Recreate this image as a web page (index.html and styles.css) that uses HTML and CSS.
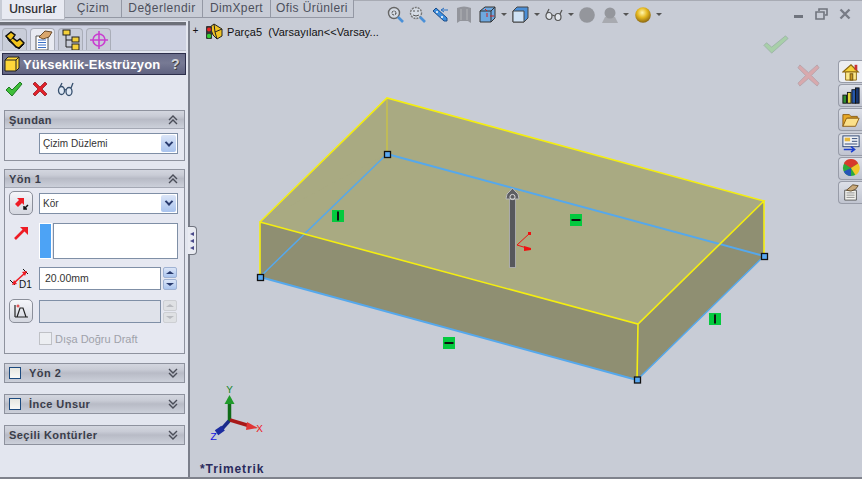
FILE: index.html
```html
<!DOCTYPE html>
<html lang="tr">
<head>
<meta charset="utf-8">
<title>Yükseklik-Ekstrüzyon</title>
<link rel="stylesheet" href="styles.css">
</head>
<body>
<div class="app">
  <aside class="side">
    <nav class="tabs">
      <span class="tab active">Unsurlar</span>
      <span class="tab t2">Çizim</span>
      <span class="tab t3">Değerlendir</span>
      <span class="tab t4">DimXpert</span>
      <span class="tab t5">Ofis Ürünleri</span>
    </nav>
    <div class="rule"></div>
    <div class="mgr-tabs">
      <span class="mgr-tab"><svg width="20" height="20" viewBox="0 0 20 20"><path d="M1 6l5-4 4 3-2 3 4 3 3-2 4 4-5 5-3-1z" fill="#f2c41c" stroke="#111" stroke-width="1.500"/><path d="M1 6l3 5 10 8M4 11l4-3M14 19l5-5" fill="none" stroke="#111"/></svg></span>
      <span class="mgr-tab on"><svg width="20" height="22" viewBox="0 0 20 22"><path d="M3 7h12v14H3z" fill="#fff" stroke="#555"/><path d="M5 11h8M5 13.500h8M5 16h8M5 18.500h8" stroke="#3a6fc4"/><path d="M6 8l6-6 7 1-3 5-6 2z" fill="#d9a66c" stroke="#6a4a2a"/></svg></span>
      <span class="mgr-tab"><svg width="20" height="22" viewBox="0 0 20 22"><path d="M5 4v14h6M5 11h6" fill="none" stroke="#222"/><rect x="2" y="1" width="7" height="5" fill="#f4d03a" stroke="#222"/><rect x="11" y="8" width="7" height="5" fill="#f4d03a" stroke="#222"/><rect x="11" y="15" width="7" height="6" fill="#f4d03a" stroke="#222"/></svg></span>
      <span class="mgr-tab"><svg width="20" height="20" viewBox="0 0 20 20" fill="none" stroke="#c93fd0" stroke-width="1.600"><circle cx="10" cy="10" r="6"/><path d="M10 1v18M1 10h18"/></svg></span>
    </div>
    <header class="title">
      <svg width="16" height="16" viewBox="0 0 16 16"><path d="M1 4l3-3h11v11l-3 3H1z" fill="#ffd83a" stroke="#222"/><path d="M1 4h11v11M12 4l3-3" fill="none" stroke="#222"/></svg>
      <span class="title-text">Yükseklik-Ekstrüzyon</span>
      <span class="help">?</span>
    </header>
    <div class="actions">
      <svg width="18" height="16" viewBox="0 0 18 16"><path d="M1 9l3-3 3 3 8-8 2 2-10 12z" fill="#3fbe3a" stroke="#1f7a22"/></svg>
      <svg width="16" height="16" viewBox="0 0 16 16"><path d="M1 3l2-2 5 5 5-5 2 2-5 5 5 5-2 2-5-5-5 5-2-2 5-5z" fill="#e2212a" stroke="#8c1015" stroke-width=".7"/></svg>
      <svg width="18" height="16" viewBox="0 0 18 16" fill="#dfe8f5" stroke="#37506e" stroke-width="1.300"><ellipse cx="4.500" cy="9.500" rx="3" ry="4"/><ellipse cx="12" cy="10.500" rx="3" ry="4"/><path d="M7 8l2 1M3 6l2-4M14 7l2-5" fill="none"/></svg>
    </div>

    <section class="group first">
      <div class="group-head"><span class="head-text">Şundan</span><svg class="chev" viewBox="0 0 10 10"><path d="M1 5l4-4 4 4M1 9l4-4 4 4"/></svg></div>
      <div class="group-body">
        <div class="row-indent"><div class="select">Çizim Düzlemi<span class="select-btn"><i></i></span></div></div>
      </div>
    </section>

    <section class="group second">
      <div class="group-head"><span class="head-text">Yön 1</span><svg class="chev" viewBox="0 0 10 10"><path d="M1 5l4-4 4 4M1 9l4-4 4 4"/></svg></div>
      <div class="group-body tall">
        <div class="line first-line">
          <span class="icon-btn"><svg width="16" height="16" viewBox="0 0 16 16"><path d="M2 9l4-4-2-2h7v7L9 8l-4 4z" fill="#ee1c25"/><path d="M15 10l-4 4M11 11v3h3" fill="none" stroke="#111" stroke-width="1.500"/></svg></span>
          <div class="select">Kör<span class="select-btn"><i></i></span></div>
        </div>
        <div class="line">
          <span class="icon-slot"><svg width="16" height="16" viewBox="0 0 16 16"><path d="M2 14L11 5" stroke="#ee1c25" stroke-width="2.600"/><path d="M7 2h8v8z" fill="#ee1c25"/></svg></span>
          <div class="list"><span class="list-blue"></span><span class="list-box"></span></div>
        </div>
        <div class="line spin-line">
          <span class="icon-slot dim"><svg width="22" height="22" viewBox="0 0 22 22"><path d="M5 15L16 5" stroke="#ee1c25" stroke-width="1.600"/><path d="M1 12l5 5M14 1l5 5" stroke="#111"/><path d="M3 17l5-1-3-4zM18 3l-5 1 3 4z" fill="#ee1c25"/></svg><b>D1</b></span>
          <div class="input">20.00mm</div>
          <div class="spin"><span><i class="up"></i></span><span><i class="down"></i></span></div>
        </div>
        <div class="line spin-line">
          <span class="icon-btn"><svg width="16" height="16" viewBox="0 0 16 16" fill="none" stroke="#222"><path d="M2 14h13M4 14l3-9h3l3 9M2 14V2" stroke-width="1.200"/><circle cx="5" cy="3" r="1" stroke="#d22"/></svg></span>
          <div class="input off"></div>
          <div class="spin off"><span><i class="up"></i></span><span><i class="down"></i></span></div>
        </div>
        <label class="check-line"><span class="check off"></span>Dışa Doğru Draft</label>
      </div>
    </section>

    <section class="group closed c1">
      <div class="group-head"><span class="check"></span><span class="head-text">Yön 2</span><svg class="chev" viewBox="0 0 10 10"><path d="M1 1l4 4 4-4M1 5l4 4 4-4"/></svg></div>
    </section>
    <section class="group closed">
      <div class="group-head"><span class="check"></span><span class="head-text">İnce Unsur</span><svg class="chev" viewBox="0 0 10 10"><path d="M1 1l4 4 4-4M1 5l4 4 4-4"/></svg></div>
    </section>
    <section class="group closed">
      <div class="group-head"><span class="head-text">Seçili Kontürler</span><svg class="chev" viewBox="0 0 10 10"><path d="M1 1l4 4 4-4M1 5l4 4 4-4"/></svg></div>
    </section>
  </aside>

  <span class="grip"><i></i><i></i><i></i></span>

  <main class="view">
    <div class="tree"><span class="plus">+</span>
      <svg width="18" height="18" viewBox="0 0 18 18"><path d="M5 4l4-3 8 5v7l-5 3-4-4z" fill="#f0c322" stroke="#222"/><path d="M9 1l1 8 7-3M10 9l2 7" fill="none" stroke="#222"/><rect x="1" y="3" width="6" height="13" rx="1" fill="#333"/><circle cx="4" cy="6.500" r="2" fill="#e22"/><circle cx="4" cy="13" r="2.200" fill="#3c3"/></svg>
      <span class="tree-text">Parça5&nbsp; (Varsayılan&lt;&lt;Varsay...</span>
    </div>

    <div class="view-tools">
      <svg class="a" width="17" height="17" viewBox="0 0 17 17"><circle cx="7" cy="7" r="5.500" fill="#d5dbe4" stroke="#666" stroke-width="1.400"/><circle cx="7" cy="7" r="2" fill="none" stroke="#333" stroke-dasharray="2 1"/><path d="M11 11l5 5" stroke="#4a90d8" stroke-width="2.600"/></svg>
      <svg class="a" width="17" height="17" viewBox="0 0 17 17"><circle cx="7" cy="7" r="5.500" fill="#d5dbe4" stroke="#777" stroke-width="1.400" stroke-dasharray="2 1"/><path d="M4 9q3 2 6 0M4 5h2M8 5h2" stroke="#555" fill="none"/><path d="M11 11l5 5" stroke="#4a90d8" stroke-width="2.600"/></svg>
      <svg class="b" width="17" height="17" viewBox="0 0 17 17"><path d="M1 5l3-3 11 10v3h-3z" fill="#3d8fe0" stroke="#1c4c88"/><circle cx="5" cy="6" r="1" fill="#fff"/><circle cx="10" cy="11" r="1" fill="#fff"/><path d="M9 4h7M9 4l3-2M9 4l3 2" stroke="#2a70c0" fill="none"/></svg>
      <svg class="faded b" width="14" height="17" viewBox="0 0 14 17"><path d="M0 2q7-3 14 0v15q-3-2-3-2H3l-3 2z" fill="#8e9096"/><path d="M4 3v11M10 3v11" stroke="#a5a7ac" stroke-width="1.500"/></svg>
      <span class="tool b"><svg width="17" height="17" viewBox="0 0 17 17"><path d="M1 5l5-4h10v11l-4 4H1z" fill="#6ea8e0" stroke="#333"/><path d="M1 5h11v11M12 5l4-4" fill="none" stroke="#333"/><path d="M8 7v4M6 3l2 2M11 10h4" stroke="#c22"/></svg><i></i></span>
      <span class="tool"><svg width="17" height="17" viewBox="0 0 17 17"><path d="M1 5l4-4h11v11l-4 4H1z" fill="#4a8fd8" stroke="#444"/><path d="M1 5h11v11H1z" fill="#cfe2f5" stroke="#444"/></svg><i></i></span>
      <span class="tool"><svg width="18" height="15" viewBox="0 0 18 15" fill="#e2e6ec" stroke="#555" stroke-width="1.200"><ellipse cx="4" cy="9" rx="3" ry="3.500"/><ellipse cx="13" cy="10" rx="3" ry="3.500"/><path d="M7 8l3 1M2 6l2-4M15 7l2-4" fill="none"/></svg><i></i></span>
      <svg class="faded" width="16" height="16" viewBox="0 0 16 16"><circle cx="8" cy="8" r="7.800" fill="#8f9196"/></svg>
      <span class="tool c"><svg class="faded" width="16" height="16" viewBox="0 0 16 16"><path d="M0 16l3-6h10l3 6z" fill="#a5a7ac"/><circle cx="8" cy="6" r="5.500" fill="#8f9196"/></svg><i></i></span>
      <span class="tool d"><svg width="16" height="16" viewBox="0 0 16 16"><defs><radialGradient id="gold" cx=".45" cy=".35" r=".7"><stop offset="0" stop-color="#fff6b0"/><stop offset=".45" stop-color="#e5b81f"/><stop offset="1" stop-color="#7d5a10"/></radialGradient></defs><circle cx="8" cy="8" r="7.800" fill="url(#gold)"/></svg><i></i></span>
    </div>

    <div class="win-btns">
      <span class="win-min"></span>
      <svg width="13" height="12" viewBox="0 0 13 12" fill="none" stroke="#70747e" stroke-width="1.600"><path d="M4 3V1h8v6H10M1 4h8v7H1z"/></svg>
      <svg width="12" height="12" viewBox="0 0 12 12"><path d="M1.500 1.500l9 9M10.500 1.500l-9 9" stroke="#787c86" stroke-width="2.400"/></svg>
    </div>

    <svg class="ok" width="26" height="19" viewBox="0 0 30 22"><path d="M1 12l3-3 6 5L26 1l3 3L10 21z" fill="#a8cfa9" stroke="#9db2a8"/></svg>
    <svg class="cancel" width="23" height="23" viewBox="0 0 24 24"><path d="M3 1l9 8 9-8 2 3-8 8 8 8-2 3-9-8-9 8-2-3 8-8-8-8z" fill="#d8a9ad" stroke="#b9a5ac"/></svg>

    <div class="task">
      <span class="task-btn"><svg width="20" height="20" viewBox="0 0 20 20"><path d="M1 10l9-8 8 8z" fill="#f5d23a" stroke="#8a6510" stroke-width="1.300"/><path d="M4 10h12v9H4z" fill="#fbe88a" stroke="#8a6510"/><rect x="9" y="12" width="3" height="7" fill="#c99820" stroke="#6b4d0d"/><rect x="14" y="2" width="3" height="6" fill="#c33"/></svg></span>
      <span class="task-btn"><svg width="20" height="20" viewBox="0 0 20 20"><rect x="1" y="9" width="4" height="9" fill="#2c8c2f" stroke="#111"/><rect x="6" y="6" width="4" height="12" fill="#e4d53a" stroke="#111"/><rect x="11" y="3" width="4" height="15" fill="#2457a8" stroke="#111"/><rect x="15" y="1" width="4" height="17" fill="#17366f" stroke="#111"/></svg></span>
      <span class="task-btn"><svg width="20" height="18" viewBox="0 0 20 18"><path d="M1 3h7l2 2h7v2H6L1 16z" fill="#e8a927" stroke="#8a5a10"/><path d="M5 7h14l-4 9H1z" fill="#fbe08a" stroke="#8a5a10"/></svg></span>
      <span class="task-btn"><svg width="20" height="20" viewBox="0 0 20 20"><rect x="1" y="1" width="18" height="12" fill="#eef1f6" stroke="#27406e"/><path d="M3 3h6v4H3z" fill="#e6b73a"/><path d="M11 4h6M11 7h6M3 10h14" stroke="#27406e"/><path d="M2 16h11M10 13l4 3-4 3" stroke="#1c3fd0" stroke-width="1.700" fill="none"/></svg></span>
      <span class="task-btn"><svg width="20" height="20" viewBox="0 0 20 20"><circle cx="10" cy="10" r="9" fill="#2caa3c"/><path d="M10 10L2 5a9 9 0 0 1 16 0z" fill="#d63a2c"/><path d="M10 10l8-5a9 9 0 0 1-3 13z" fill="#f0c82a"/><path d="M10 10v9a9 9 0 0 1-8-5z" fill="#2454b8"/></svg></span>
      <span class="task-btn"><svg width="20" height="20" viewBox="0 0 20 20"><path d="M3 8h13v11H3z" fill="#f2f2ee" stroke="#555"/><path d="M5 11h9M5 13.500h9M5 16h9" stroke="#888"/><path d="M5 8l7-6 6 1-3 4-5 2z" fill="#c9a97a" stroke="#5f4a2a"/></svg></span>
    </div>

    <svg class="model" width="672" height="458" viewBox="190 21 672 458">
      <polygon class="f-top" points="387,98 764,201 764,256 638,324 260,222"/>
      <polygon class="f-side" points="260,222 638,324 637,380 260,277"/>
      <polygon class="f-side" points="638,324 764,201 764,256 637,380"/>
      <polygon class="f-top" points="387,98 260,222 387,154"/>
      <path class="faint" d="M387 98V154"/>
      <path class="blue thin" d="M260 277L387 154M764 256L637 380"/>
      <path class="blue" d="M387 154L764 256M260 277L637 380"/>
      <path class="yel" d="M260 222L387 98L764 201L638 324L260 222V277M638 324L637 380M764 201V256"/>
      <g class="handle-pts">
        <rect x="384.500" y="151.500" width="6" height="6"/><rect x="761.500" y="253.500" width="6" height="6"/><rect x="634.500" y="377" width="6" height="6"/><rect x="257.500" y="274.500" width="6" height="6"/>
      </g>
      <g class="rel"><rect x="332" y="210" width="12" height="12"/><path d="M338 211.500v9"/></g>
      <g class="rel"><rect x="570" y="214" width="12" height="12"/><path d="M571.500 220h9"/></g>
      <g class="rel"><rect x="709" y="313" width="12" height="12"/><path d="M715 314.500v9"/></g>
      <g class="rel"><rect x="443" y="337" width="12" height="12"/><path d="M444.500 343h9"/></g>
      <rect class="stem" x="509.500" y="198.500" width="6" height="69"/>
      <path class="knob" d="M506 199q0-6 4-8l2.500-3 2.500 3q4 2 4 8z"/>
      <circle class="knob-eye" cx="512.500" cy="197" r="2.600"/>
      <path class="origin" d="M517 245L530 233M517 245L530 249"/>
      <rect class="origin-fill" x="528" y="232" width="3" height="3"/>
      <path class="origin-fill" d="M524 246l7 2 0 2-7 1z"/>
      <g class="triad">
        <path class="t-g" d="M229.500 422V403"/><path class="t-gf" d="M229.500 395l-5 9h10z"/>
        <path class="t-r" d="M230 420L250 426"/><path class="t-rf" d="M258 428l-11-6-1 8z"/>
        <path class="t-b" d="M229 421L220 431"/><rect class="t-bf" x="216" y="428" width="8" height="6" transform="rotate(-35 219 431)"/>
      </g>
      <text class="lab-y" x="229.500" y="393">Y</text>
      <text class="lab-x" x="259.500" y="432">X</text>
      <text class="lab-z" x="213.500" y="440">Z</text>
    </svg>

    <div class="view-name">*Trimetrik</div>
  </main>
</div>
</body>
</html>
```

FILE: styles.css
```css
* { box-sizing: border-box; }
html, body { margin: 0; height: 100%; }
body { font-family: "Liberation Sans", Arial, sans-serif; font-size: 12px; background: #c8ccd6; overflow: hidden; }
.app { width: 862px; height: 479px; display: flex; position: relative; border-top: 1px solid #a8abb4; border-bottom: 2px solid #7f828c; }

.side { width: 190px; flex: none; background: #e3e6ef; border-right: 2px solid #7b7f8b; padding-right: 2px; position: relative; }

.tabs { display: flex; position: absolute; top: -1px; left: 0; height: 21px; z-index: 2; width: 354px; padding-left: 2px; background: #c8ccd6; }
.tab { height: 18px; width: 57px; border: 1px solid #9498a4; border-top: 0; border-left: 0; background: #c8ccd6; color: #4d505c; text-align: center; line-height: 17px; font-size: 12px; letter-spacing: .5px; white-space: nowrap; }
.tab.t3 { width: 81px; }
.tab.t4 { width: 68px; letter-spacing: .4px; }
.tab.t5 { width: 83px; letter-spacing: .4px; }
.tab.active { width: 63px; height: 20px; background: #e8eaf2; color: #202226; line-height: 18px; border-color: #b3b6c0; letter-spacing: .3px; -webkit-text-stroke: .2px #222; }

.rule { margin: 21px 0 0 0; height: 4px; background: #6d7079; border-bottom: 1px solid #aab; }

.mgr-tabs { display: flex; gap: 3px; padding: 2px 0 0 2px; height: 25px; background: #ced2e2; border-bottom: 1px solid #bcc0cb; }
.mgr-tab { width: 25px; height: 22px; display: flex; align-items: center; justify-content: center; background: #c9cdd9; border: 1px solid #a9adb8; border-bottom: 0; border-radius: 4px 4px 0 0; overflow: hidden; }
.mgr-tab.on { background: #e9ebf2; }

.title { margin: 2px 0 0 2px; height: 22px; width: 184px; display: flex; align-items: center; gap: 3px; padding-left: 1px; background: linear-gradient(#6b6e8a, #777a94 45%, #5f6280); border: 1px solid #2c2e4a; color: #fff; font-weight: bold; font-size: 13px; letter-spacing: .15px; }
.title-text { flex: 1; white-space: nowrap; }
.help { width: 14px; color: #d3d4da; font-size: 14px; text-shadow: 1px 1px 0 #444; }

.actions { display: flex; gap: 9px; align-items: center; padding-left: 5px; height: 27px; }

.group { margin: 8px 0 0 4px; width: 181px; border: 1px solid #8e929e; background: #e6e8f1; }
.group.second { margin-top: 8px; }
.group.closed { height: 20px; margin-top: 11px; }
.group.c1 { margin-top: 9px; }
.group-head { height: 18px; display: flex; align-items: center; padding: 0 2px 0 4px; background: linear-gradient(#d3d6df, #c9ccd6 30%, #b8bbc6 50%, #ccd0da); border-bottom: 1px solid #a4a8b4; color: #3a3d4a; font-size: 11px; font-weight: bold; letter-spacing: .45px; }
.closed .group-head { border: 0; }
.head-text { flex: 1; white-space: nowrap; }
.check + .head-text { margin-left: 8px; }
.chev { width: 10px; height: 10px; margin: 0 4px 0 3px; fill: none; stroke: #4a4d58; stroke-width: 1.400; }

.group-body { padding: 4px 3px 0 3px; height: 31px; }
.group-body.tall { height: 165px; padding: 3px 0 0 4px; }
.row-indent { padding-left: 31px; }

.select { height: 21px; border: 1px solid #7f8fa6; background: #fff; font-size: 10px; color: #333; padding-left: 3px; line-height: 19px; display: flex; justify-content: space-between; width: 139px; letter-spacing: .05px; }
.select-btn { width: 15px; height: 17px; margin: 1px; background: linear-gradient(#dbe5f7, #a9c3ee); border-radius: 2px; display: flex; align-items: center; justify-content: center; }
.select-btn i { width: 6px; height: 6px; border: solid #283a6e; border-width: 0 2px 2px 0; transform: rotate(45deg) translate(-1px, -1px); }

.line { display: flex; align-items: flex-start; margin-bottom: 8px; }
.first-line { align-items: center; }
.line .select { margin-left: 6px; }
.icon-btn { width: 24px; height: 24px; border: 1px solid #8b8f9a; border-radius: 5px; background: linear-gradient(#f5f6fa, #d4d7e0); display: flex; align-items: center; justify-content: center; flex: none; }
.icon-slot { width: 24px; flex: none; position: relative; display: flex; justify-content: center; padding-top: 2px; }
.icon-slot.dim { padding-top: 0; justify-content: flex-start; height: 22px; }
.icon-slot.dim b { position: absolute; left: 10px; top: 12px; font-size: 10px; line-height: 10px; font-weight: normal; color: #111; }
.list { display: flex; gap: 1px; margin-left: 6px; height: 36px; }
.list-blue { width: 13px; background: #4da3f5; border: 1px solid #fff; }
.list-box { width: 125px; background: #fff; border: 1px solid #7f8fa6; }
.spin-line { align-items: center; margin-bottom: 9px; }
.input { margin-left: 6px; width: 122px; height: 23px; background: #fff; border: 1px solid #7f8fa6; color: #333; font-size: 10.500px; line-height: 21px; padding-left: 5px; }
.input.off { background: #dfe2ea; }
.spin { margin-left: 2px; width: 14px; display: flex; flex-direction: column; gap: 1px; }
.spin span { height: 11px; background: linear-gradient(#dbe5f7, #aac4ee); border: 1px solid #9fb2d3; border-radius: 2px; display: flex; align-items: center; justify-content: center; }
.spin.off span { background: #dfe1e4; border-color: #cdcfd3; }
.spin i { border-left: 4px solid transparent; border-right: 4px solid transparent; }
.spin i.up { border-bottom: 3px solid #283a6e; }
.spin i.down { border-top: 3px solid #283a6e; }
.spin.off i.up { border-bottom-color: #b9bbc0; }
.spin.off i.down { border-top-color: #b9bbc0; }
.check-line { display: flex; align-items: center; gap: 3px; margin-left: 30px; height: 13px; color: #9fa2aa; font-size: 11px; white-space: nowrap; }
.check { width: 12px; height: 12px; border: 1px solid #1c4a7e; background: linear-gradient(#e6e6e0, #f8f8f6); flex: none; }
.check.off { width: 13px; height: 13px; border-color: #bfc1c6; background: #eceef2; }

.grip { position: absolute; left: 188px; top: 225px; width: 9px; height: 29px; background: #e9ebf2; border: 1px solid #70747f; border-left: 0; border-radius: 0 4px 4px 0; z-index: 3; display: flex; flex-direction: column; align-items: center; justify-content: center; gap: 3px; }
.grip i { border-top: 2.500px solid transparent; border-bottom: 2.500px solid transparent; border-right: 4px solid #4a4a8a; }

.view { flex: 1; position: relative; background: #c8ccd6; }
.tree { position: absolute; left: 1px; top: 22px; display: flex; align-items: center; gap: 5px; font-size: 11px; color: #111; white-space: nowrap; }
.tree-text { letter-spacing: .05px; margin-left: -1px; }
.plus { width: 9px; height: 9px; font: 10px/8px "Liberation Mono", monospace; text-align: center; color: #111; }
.view-tools { position: absolute; left: 197px; top: 5px; display: flex; align-items: center; gap: 5px; }
.view-tools .b { margin-left: 3px; }
.view-tools .a + .b { margin-left: 1px; }
.view-tools .c { margin-left: 2px; }
.view-tools .d { margin-left: 1px; }
.tool { display: flex; align-items: center; gap: 5px; }
.tool i { border-left: 3px solid transparent; border-right: 3px solid transparent; border-top: 3px solid #555; }
.faded { opacity: .9; }
.win-btns { position: absolute; right: 11px; top: 7px; display: flex; align-items: center; gap: 11px; }
.win-min { width: 9px; height: 3px; background: #70747e; margin: 4px 1px 0 0; }
.ok { position: absolute; left: 573px; top: 34px; }
.cancel { position: absolute; left: 607px; top: 63px; }
.task { position: absolute; right: 0; top: 59px; display: flex; flex-direction: column; gap: 1.200px; z-index: 1; }
.task-btn { width: 24px; height: 23px; background: linear-gradient(#dde0e8, #c0c4d0); border: 1px solid #989ca8; border-right: 0; border-radius: 4px 0 0 4px; display: flex; align-items: center; justify-content: center; padding-left: 1px; }
.task-btn:first-child { background: #eceef3; }
.task-btn svg { width: 18px; height: 18px; }

.model { position: absolute; left: 0; top: 20px; }
.f-top { fill: #a9aa82; }
.f-side { fill: #8f8f72; }
.faint { stroke: #c8c14a; stroke-width: 1.500; fill: none; }
.yel { stroke: #f4ee10; stroke-width: 1.600; fill: none; }
.blue { stroke: #55a8ec; stroke-width: 2; fill: none; }
.blue.thin { stroke-width: 1.500; }
.handle-pts rect { fill: #5aa9f2; stroke: #111; stroke-width: 1.300; }
.rel rect { fill: #04c93e; }
.rel path { stroke: #111; stroke-width: 2; fill: none; }
.stem { fill: #57585c; stroke: #aaa; }
.knob { fill: #5d5e62; stroke: #bbb; }
.knob-eye { fill: none; stroke: #ddd; }
.origin { stroke: #f01010; fill: none; }
.origin-fill { fill: #f01010; }
.t-g { stroke: #0f6b17; stroke-width: 3.500; }
.t-gf { fill: #1f9a2a; }
.t-r { stroke: #a81818; stroke-width: 3.500; }
.t-rf { fill: #e03535; }
.t-b { stroke: #1a2a8a; stroke-width: 3.500; }
.t-bf { fill: #1c2ca0; }
.lab-y, .lab-x, .lab-z { font: 11px "Liberation Mono", monospace; text-anchor: middle; }
.lab-y { fill: #16862a; }
.lab-x { fill: #ee1c25; }
.lab-z { fill: #1616e0; }
.view-name { position: absolute; left: 10px; top: 461px; color: #2a2a5c; font-weight: bold; font-size: 12px; letter-spacing: .9px; }
```
